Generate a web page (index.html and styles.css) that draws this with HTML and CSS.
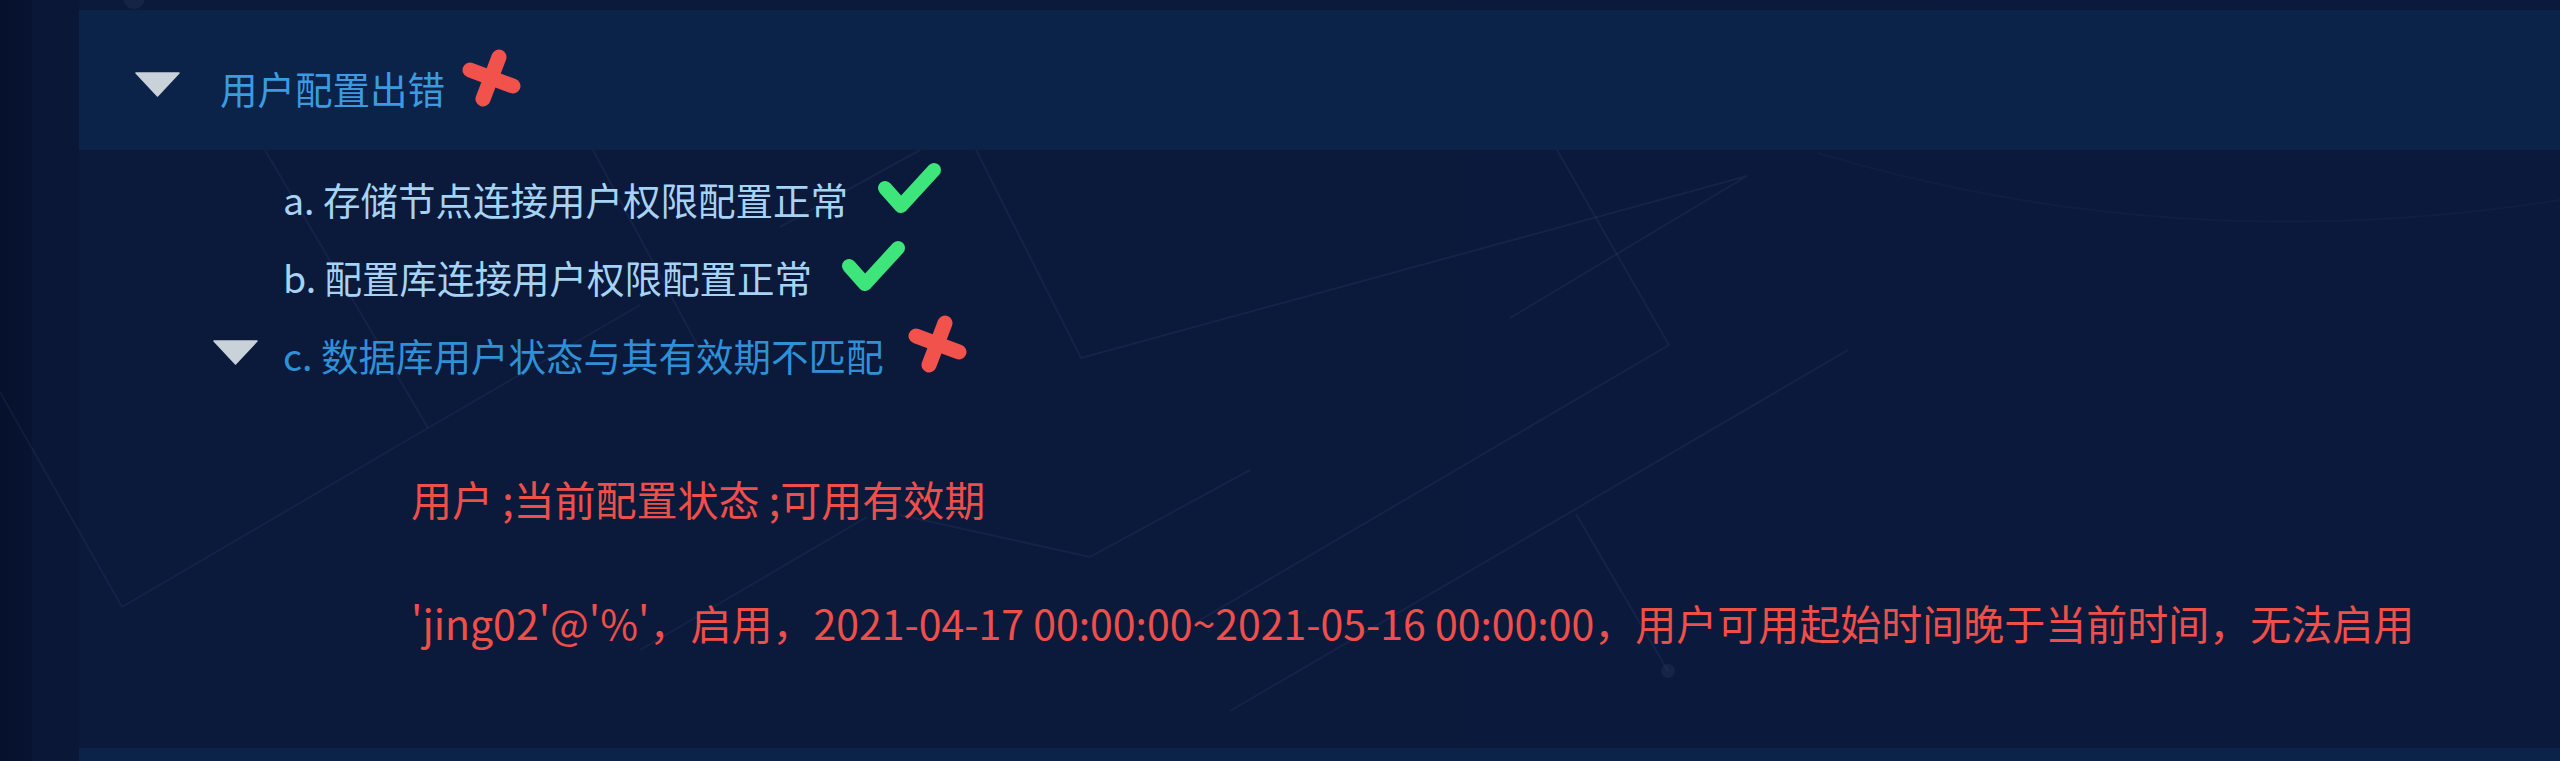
FILE: index.html
```html
<!DOCTYPE html>
<html lang="zh-CN">
<head>
<meta charset="utf-8">
<title>用户配置出错</title>
<link rel="stylesheet" href="styles.css">
</head>
<body>
<svg class="backdrop" viewBox="0 0 2560 761" aria-hidden="true">
  <g class="net">
    <polyline points="0,392 122,607 428,428 640,305"/>
    <polyline points="265,150 428,428"/>
    <polyline points="593,150 700,350"/>
    <polyline points="976,150 1081,358 1747,176 1510,318"/>
    <polyline points="1557,150 1669,345 1200,620"/>
    <polyline points="1848,350 1230,711"/>
    <polyline points="1576,514 1668,671"/>
    <polyline points="1250,470 1090,557 900,515"/>
    <polyline points="867,517 640,650"/>
    <polyline points="780,227 920,150"/>
    <path class="faint" d="M1818,153 Q2176,260 2560,200"/>
  </g>
  <circle class="node" cx="1668" cy="671" r="7"/>
  <circle class="node" cx="134" cy="-2" r="11"/>
</svg>

<div class="page">
  <section class="group">
    <header class="group-head">
      <svg class="caret" viewBox="0 0 45 25"><polygon points="1,1 44,1 22.5,24"/></svg>
      <h2 class="group-title">用户配置出错</h2>
      <svg class="mark mark-fail" viewBox="0 0 60 60"><line x1="38" y1="9" x2="22" y2="51"/><line x1="9" y1="22" x2="52" y2="38"/></svg>
    </header>

    <ul class="checks">
      <li class="check">
        <span class="toggle"></span>
        <span class="check-text">a. 存储节点连接用户权限配置正常</span>
        <svg class="mark mark-ok" viewBox="0 0 66 54"><polyline points="9,27 25,45 58,9"/></svg>
      </li>
      <li class="check">
        <span class="toggle"></span>
        <span class="check-text">b. 配置库连接用户权限配置正常</span>
        <svg class="mark mark-ok" viewBox="0 0 66 54"><polyline points="9,27 25,45 58,9"/></svg>
      </li>
      <li class="check is-open">
        <span class="toggle"><svg class="caret" viewBox="0 0 45 25"><polygon points="1,1 44,1 22.5,24"/></svg></span>
        <span class="check-text">c. 数据库用户状态与其有效期不匹配</span>
        <svg class="mark mark-fail" viewBox="0 0 60 60"><line x1="38" y1="9" x2="22" y2="51"/><line x1="9" y1="22" x2="52" y2="38"/></svg>
      </li>
    </ul>

    <div class="detail">
      <p class="detail-line">用户 ;当前配置状态 ;可用有效期</p>
      <p class="detail-line">'jing02'@'%'，启用，2021-04-17 00:00:00~2021-05-16 00:00:00，用户可用起始时间晚于当前时间，无法启用</p>
    </div>
  </section>

  <section class="group">
    <header class="group-head group-head--next"></header>
  </section>
</div>
</body>
</html>
```

FILE: styles.css
```css
html, body {
  margin: 0;
  padding: 0;
}

body {
  width: 2560px;
  height: 761px;
  overflow: hidden;
  position: relative;
  font-family: "Noto Sans CJK SC", "Microsoft YaHei", "Noto Sans", sans-serif;
  background:
    linear-gradient(to right,
      #06112d 0,
      #071330 32px,
      #0a1737 32px,
      #0a1737 79px,
      #0b193a 79px,
      #0b1a3c 100%);
}

.backdrop {
  position: absolute;
  left: 0;
  top: 0;
  width: 2560px;
  height: 761px;
  z-index: 0;
}

.net polyline,
.net path {
  fill: none;
  stroke: rgba(150, 178, 228, 0.065);
  stroke-width: 2;
}

.net .faint {
  stroke: rgba(150, 178, 228, 0.035);
}

.node {
  fill: rgba(150, 178, 228, 0.07);
}

.page {
  position: relative;
  z-index: 1;
  padding: 10px 0 0 79px;
}

.group-head {
  height: 140px;
  box-sizing: border-box;
  padding: 17px 0 0 56px;
  display: flex;
  align-items: center;
  background: #0b2349;
}

.group-head .caret {
  margin-right: 40px;
  margin-bottom: 8px;
}

.caret {
  display: block;
  width: 45px;
  height: 25px;
  flex: none;
}

.caret polygon {
  fill: #c9d2d9;
  stroke: #c9d2d9;
  stroke-width: 1.5;
  stroke-linejoin: round;
}

.group-title {
  margin: 0;
  font-size: 37.5px;
  font-weight: normal;
  line-height: 1.4;
  color: #3b9ae0;
}

.mark {
  display: block;
  flex: none;
}

.mark-fail {
  width: 60px;
  height: 60px;
}

.mark-fail line {
  stroke: #f2524c;
  stroke-width: 15;
  stroke-linecap: round;
}

.mark-ok {
  width: 66px;
  height: 54px;
}

.mark-ok polyline {
  fill: none;
  stroke: #3de57a;
  stroke-width: 14;
  stroke-linecap: round;
  stroke-linejoin: round;
}

.group-head .mark-fail {
  margin-left: 16px;
  margin-bottom: 22px;
}

.checks {
  list-style: none;
  margin: 10px 0 0 0;
  padding: 0 0 0 134px;
}

.check {
  height: 78px;
  display: flex;
  align-items: center;
}

.toggle {
  width: 70px;
  flex: none;
  display: flex;
  align-items: center;
}

.toggle .caret {
  margin-top: -6px;
}

.check-text {
  font-size: 37.5px;
  line-height: 78px;
  color: #a6d3f4;
  white-space: nowrap;
}

.check .mark {
  margin-left: 28px;
  margin-bottom: 22px;
}

.check .mark-fail {
  margin-left: 24px;
}

.check.is-open .check-text {
  color: #2f90d6;
}

.detail {
  padding: 42px 0 0 332px;
}

.detail-line {
  margin: 0;
  font-size: 41px;
  line-height: 124px;
  color: #ef4f4a;
  white-space: nowrap;
}

.group-head--next {
  margin-top: 64px;
  height: 40px;
  padding: 0;
}
```
